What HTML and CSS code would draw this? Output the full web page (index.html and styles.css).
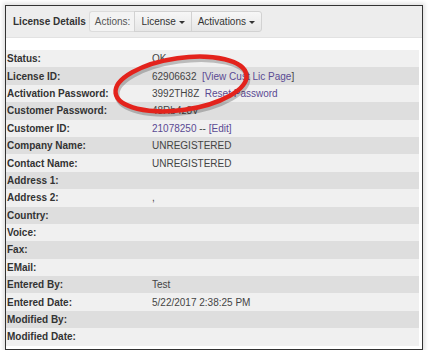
FILE: index.html
```html
<!DOCTYPE html>
<html>
<head>
  <title>License Details</title>
  <link rel="stylesheet" href="styles.css">
</head>
<body>
<div class="frame">
  <!-- Header bar -->
  <div class="header">
    <span class="title">License Details</span>
    <div class="btn-group">
      <span class="addon">Actions:</span>
      <button type="button" class="btn">License <span class="caret"></span></button>
      <button type="button" class="btn">Activations <span class="caret"></span></button>
    </div>
  </div>

  <!-- Detail rows -->
  <table class="details">
    <tr><th>Status:</th><td>OK</td></tr>
    <tr><th>License ID:</th><td>62906632 &nbsp;<a href="#">[View Cust Lic Page</a>]</td></tr>
    <tr><th>Activation Password:</th><td>3992TH8Z &nbsp;<a href="#">Reset Password</a></td></tr>
    <tr><th>Customer Password:</th><td>48Rb4z8V</td></tr>
    <tr><th>Customer ID:</th><td><a href="#">21078250</a> -- <a href="#">[Edit]</a></td></tr>
    <tr><th>Company Name:</th><td>UNREGISTERED</td></tr>
    <tr><th>Contact Name:</th><td>UNREGISTERED</td></tr>
    <tr><th>Address 1:</th><td></td></tr>
    <tr><th>Address 2:</th><td>,</td></tr>
    <tr><th>Country:</th><td></td></tr>
    <tr><th>Voice:</th><td></td></tr>
    <tr><th>Fax:</th><td></td></tr>
    <tr><th>EMail:</th><td></td></tr>
    <tr><th>Entered By:</th><td>Test</td></tr>
    <tr><th>Entered Date:</th><td>5/22/2017 2:38:25 PM</td></tr>
    <tr><th>Modified By:</th><td></td></tr>
    <tr><th>Modified Date:</th><td></td></tr>
  </table>

  <!-- Red marker circle drawn over the screenshot -->
  <svg class="marker" width="150" height="70" viewBox="0 0 150 70">
    <g transform="rotate(-8 75 34)">
      <ellipse cx="76" cy="37" rx="66" ry="26" fill="none" stroke="rgba(0,0,0,0.22)" stroke-width="5"/>
      <ellipse cx="75" cy="34" rx="66" ry="26" fill="none" stroke="#e3231c" stroke-width="4.5"/>
    </g>
  </svg>
</div>
</body>
</html>
```

FILE: styles.css
```css
/* Screenshot frame */
body {
  margin: 0;
  background: #fff;
  font-family: "Liberation Sans", Arial, sans-serif;
}

.frame {
  position: relative;
  margin: 5px 0 0 5px;
  width: 416px;
  height: 343px;
  border: 1px solid #333;
  background: #fff;
  box-shadow: 0 0 4px 2px rgba(0, 0, 0, 0.12);
}

/* Header */
.header {
  display: flex;
  align-items: center;
  height: 31px;
  background: #ededed;
  border-bottom: 1px solid #e2e2e2;
  padding-left: 7px;
}

.title {
  font-size: 10px;
  font-weight: bold;
  color: #333;
  margin-right: 3px;
}

.btn-group {
  display: flex;
  height: 21px;
}

.addon {
  display: flex;
  align-items: center;
  padding: 0 5px;
  font-size: 10px;
  color: #555;
  background: #f3f3f3;
  border: 1px solid #dcdcdc;
  border-right: none;
  border-radius: 3px 0 0 3px;
}

.btn {
  font-family: "Liberation Sans", Arial, sans-serif;
  font-size: 10px;
  color: #333;
  padding: 0 6px;
  background: linear-gradient(#f7f7f7, #e6e6e6);
  border: 1px solid #d2d2d2;
  margin-left: -1px;
  cursor: pointer;
}

.btn:last-child {
  border-radius: 0 3px 3px 0;
}

.caret {
  display: inline-block;
  vertical-align: middle;
  border-top: 3px solid #333;
  border-left: 3px solid transparent;
  border-right: 3px solid transparent;
}

/* Detail table */
.details {
  margin-top: 12px;
  width: 413px;
  border-collapse: collapse;
  font-size: 10px;
  color: #444;
}

.details tr {
  height: 17.4px;
  background: #f0f0f0;
}

.details tr:nth-child(even) {
  background: #dedede;
}

.details th {
  width: 145px;
  padding: 0 0 0 1px;
  text-align: left;
  font-weight: bold;
  color: #333;
}

.details td {
  padding: 0;
}

.details a {
  color: #5b4a93;
  text-decoration: none;
}

/* Overlay annotation */
.marker {
  position: absolute;
  left: 100px;
  top: 44px;
}
```
